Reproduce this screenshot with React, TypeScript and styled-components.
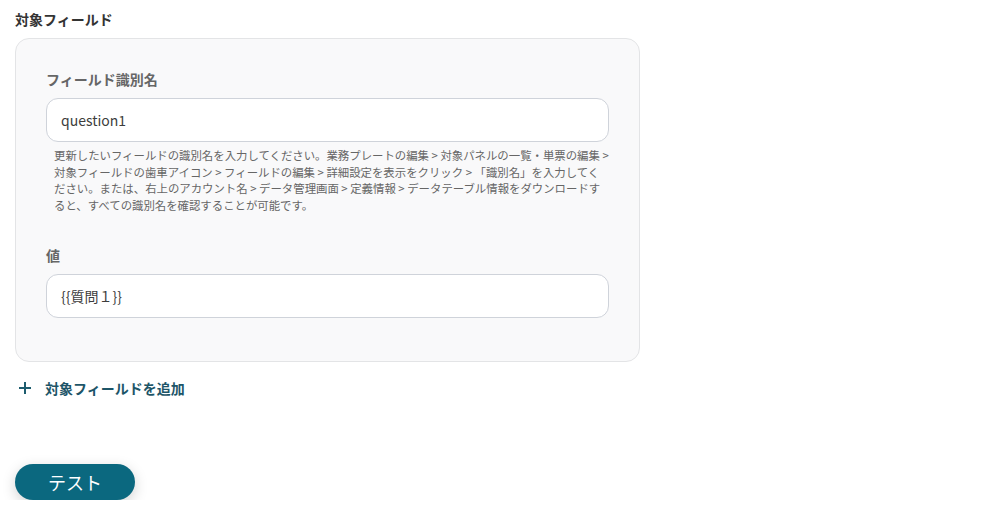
import styled, { createGlobalStyle } from "styled-components";

const GlobalStyle = createGlobalStyle`
  html, body {
    margin: 0;
    padding: 0;
    background: #ffffff;
  }
  body {
    font-family: "Noto Sans CJK JP", "Noto Sans", sans-serif;
    color: #333333;
  }
`;

const Page = styled.div`
  padding: 9px 15px 0 15px;
  width: 625px;
  display: flex;
  flex-direction: column;
`;

const SectionTitle = styled.h2`
  margin: 0;
  font-size: 14px;
  font-weight: 700;
  line-height: 20px;
  color: #333333;
`;

const Panel = styled.div`
  margin-top: 9px;
  box-sizing: border-box;
  height: 324px;
  background: #f9f9fa;
  border: 1px solid #e3e4e6;
  border-radius: 14px;
  padding: 30px 30px 0 30px;
  display: flex;
  flex-direction: column;
`;

const Field = styled.div<{ $gap?: number }>`
  display: flex;
  flex-direction: column;
  margin-top: ${(p) => p.$gap ?? 0}px;
`;

const Label = styled.label`
  font-size: 14px;
  font-weight: 700;
  line-height: 20px;
  color: #666666;
  margin-bottom: 9px;
`;

const Input = styled.div`
  box-sizing: border-box;
  height: 44px;
  background: #ffffff;
  border: 1px solid #cfd3da;
  border-radius: 12px;
  padding: 0 14px;
  display: flex;
  align-items: center;
  font-size: 14px;
  color: #3d3d3d;
`;

const Help = styled.p`
  margin: 5px 0 0 8px;
  font-size: 11.4px;
  line-height: 16.7px;
  color: #666666;
  white-space: nowrap;
`;

const AddRow = styled.button`
  margin-top: 16px;
  display: flex;
  align-items: center;
  gap: 13px;
  padding: 0 0 0 3px;
  border: none;
  background: transparent;
  font-family: inherit;
  font-size: 14px;
  font-weight: 700;
  color: #1d5568;
  cursor: pointer;
  height: 20px;
`;

const TestButton = styled.button`
  margin-top: 66px;
  width: 120px;
  height: 36px;
  border: none;
  border-radius: 18px;
  background: #0b687f;
  color: #ffffff;
  font-family: inherit;
  font-size: 18px;
  box-shadow: 0 4px 14px rgba(0, 0, 0, 0.18);
  cursor: pointer;
`;

function PlusIcon() {
  return (
    <svg width="14" height="14" viewBox="0 0 14 14">
      <path d="M7 1v12M1 7h12" stroke="#1d5c6e" strokeWidth="2" fill="none" />
    </svg>
  );
}

export default function App() {
  return (
    <>
      <GlobalStyle />
      <Page>
        <SectionTitle>対象フィールド</SectionTitle>
        <Panel>
          <Field>
            <Label>フィールド識別名</Label>
            <Input>question1</Input>
            <Help>
              更新したいフィールドの識別名を入力してください。業務プレートの編集 &gt; 対象パネルの一覧・単票の編集 &gt;
              <br />
              対象フィールドの歯車アイコン &gt; フィールドの編集 &gt; 詳細設定を表示をクリック &gt; 「識別名」を入力してく
              <br />
              ださい。または、右上のアカウント名 &gt; データ管理画面 &gt; 定義情報 &gt; データテーブル情報をダウンロードす
              <br />
              ると、すべての識別名を確認することが可能です。
            </Help>
          </Field>
          <Field $gap={31}>
            <Label>値</Label>
            <Input>{"{{質問１}}"}</Input>
          </Field>
        </Panel>
        <AddRow>
          <PlusIcon />
          対象フィールドを追加
        </AddRow>
        <TestButton>テスト</TestButton>
      </Page>
    </>
  );
}
